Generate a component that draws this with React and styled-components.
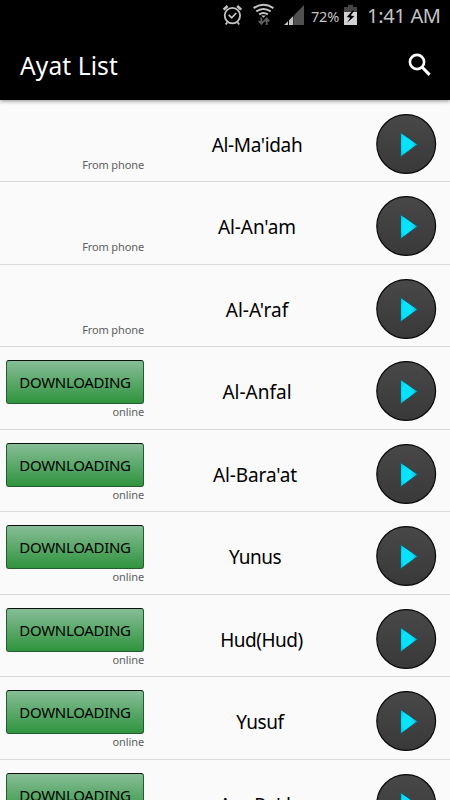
import React from "react";
import styled, { createGlobalStyle } from "styled-components";

const GlobalStyle = createGlobalStyle`
  * { box-sizing: border-box; }
  html, body { margin: 0; height: 100%; overflow: hidden; }
  body { background: #fafafa; font-family: "Noto Sans", "Open Sans", sans-serif; }
`;

const Screen = styled.div`
  width: 450px;
  height: 800px;
  overflow: hidden;
  background: #fafafa;
  display: flex;
  flex-direction: column;
`;

const Header = styled.header`
  flex: none;
  height: 100px;
  background: #000;
  box-shadow: 0 1px 4px rgba(0, 0, 0, 0.45);
  position: relative;
`;

const StatusBar = styled.div`
  height: 32px;
  display: flex;
  align-items: center;
  justify-content: flex-end;
  padding-right: 10px;
  color: #c4c4c4;
`;

const StatusIcons = styled.svg`
  width: 86px;
  height: 32px;
`;

const Percent = styled.span`
  width: 34px;
  margin-left: 6px;
  font-size: 14.5px;
  letter-spacing: -0.2px;
  line-height: 31px;
  white-space: nowrap;
`;

const Battery = styled.svg`
  width: 14px;
  height: 32px;
  margin-left: -1px;
`;

const Clock = styled.span`
  width: 73px;
  margin-left: 9px;
  font-size: 20px;
  line-height: 32px;
  letter-spacing: -0.3px;
  white-space: nowrap;
`;

const TitleBar = styled.div`
  height: 68px;
  display: flex;
  align-items: center;
  justify-content: space-between;
  padding: 0 18px 0 20px;
`;

const Title = styled.h1`
  margin: 0;
  color: #fff;
  font-size: 24.5px;
  font-weight: 400;
  line-height: 32px;
  letter-spacing: 0.12px;
`;

const SearchIcon = styled.svg`
  width: 24px;
  height: 24px;
  margin-top: -3px;
`;

const List = styled.main`
  margin-top: -0.5px;
`;

const Row = styled.div`
  height: 82.5px;
  display: grid;
  grid-template-columns: 144px 226px 60px;
  column-gap: 3px;
  border-bottom: 1.5px solid #d9d9d9;
`;

const Source = styled.div`
  padding: 13px 0 0 6px;
  display: flex;
  flex-direction: column;
  align-items: flex-end;
`;

const ButtonSlot = styled.div`
  width: 138px;
  height: 44px;
`;

const DownloadButton = styled.button`
  width: 138px;
  height: 44px;
  padding: 0;
  border: 1px solid #245b30;
  border-top-color: #0b120c;
  border-radius: 3px;
  background: linear-gradient(#87bd97, #2f943e);
  color: #000;
  font: 400 15px/42px "Noto Sans", sans-serif;
  letter-spacing: -0.3px;
  white-space: nowrap;
`;

const SourceLabel = styled.span`
  font-size: 11px;
  line-height: 15px;
  color: #606060;
  letter-spacing: -0.12px;
`;

const Name = styled.span`
  justify-self: center;
  padding-top: 30px;
  margin-right: ${(p) => 6 - 2 * p.$shift}px;
  font-size: 19px;
  line-height: 30px;
  color: #000;
  white-space: nowrap;
  letter-spacing: ${(p) => p.$tracking}px;
`;

const PlayButton = styled.svg`
  width: 62px;
  height: 62px;
  margin: 13px 0 0 -1px;
`;

const surahs = [
  { name: "Al-Ma'idah", local: true, tracking: -0.35 },
  { name: "Al-An'am", local: true, tracking: -0.1 },
  { name: "Al-A'raf", local: true },
  { name: "Al-Anfal" },
  { name: "Al-Bara'at", shift: -2, tracking: -0.1 },
  { name: "Yunus", shift: -2, tracking: -0.5 },
  { name: "Hud(Hud)", shift: 4.5, tracking: -0.5 },
  { name: "Yusuf", shift: 3, tracking: -0.4 },
  { name: "Ar - Ra'd", shift: -2, tracking: -0.2 },
];

function Play() {
  return (
    <PlayButton viewBox="0 0 62 62">
      <defs>
        <linearGradient id="disc" x2="0" y2="1">
          <stop stopColor="#484848" />
          <stop offset="1" stopColor="#393939" />
        </linearGradient>
        <radialGradient id="arrow" cx="0.35" cy="0.5" r="0.65">
          <stop offset="0.45" stopColor="#08e2ff" />
          <stop offset="1" stopColor="#10b5d0" />
        </radialGradient>
      </defs>
      <circle cx="31.2" cy="31" r="29.4" fill="url(#disc)" stroke="#080808" strokeWidth="1.2" />
      <path d="M25.6 19.4 42.6 31.4 25.6 44Z" fill="url(#arrow)" stroke="#17545f" />
    </PlayButton>
  );
}

function StatusGlyphs() {
  return (
    <StatusIcons viewBox="219 0 86 32" fill="none" stroke="#c4c4c4">
      <circle cx="232.4" cy="15.6" r="7.7" strokeWidth="1.8" />
      <path d="m228.7 14.8 3 3 4.6-4.8" strokeWidth="1.8" />
      <path d="m223.6 9.6 4-3.6M241.2 9.6l-4-3.6" strokeWidth="2.6" />
      <path d="m227.3 22.3-1.6 2.3M237.5 22.3l1.6 2.3" strokeWidth="1.8" />
      <path d="M253.6 8.1Q263.5 1.6 273.4 8.1M256.3 11.4Q263.5 6.6 270.7 11.4M259.2 14.4Q263.5 11.6 267.8 14.4" strokeWidth="2" />
      <path d="M261.3 15.5h4.4l-2.2 2.2z" fill="#c4c4c4" stroke="none" />
      <path d="M261.3 17.5v6M258.8 21l2.5 2.9 2.5-2.9M266.7 25v-6M264.2 21.3l2.5-2.9 2.5 2.9" stroke="#606060" strokeWidth="1.8" />
      <path d="M284 25 288 21.3V25ZM289 20.3 293.3 16V25H289Z" fill="#c4c4c4" stroke="none" />
      <path d="M294 15.3 304 5V25H294Z" fill="#505050" stroke="none" />
    </StatusIcons>
  );
}

export default function App() {
  return (
    <>
      <GlobalStyle />
      <Screen>
        <Header>
          <StatusBar>
            <StatusGlyphs />
            <Percent>72%</Percent>
            <Battery viewBox="345 0 14 32">
              <path d="M349 4.7h5V7h4v5h-13V7h4z" fill="#444" />
              <path d="M345 12h13v13h-13z" fill="#d2d2d2" />
              <path d="m353.6 10.5-5.8 6.4 3.4.8-3.2 5.1 7.4-6.5-3.7-.8 3.6-5z" fill="#000" />
            </Battery>
            <Clock>1:41 AM</Clock>
          </StatusBar>
          <TitleBar>
            <Title>Ayat List</Title>
            <SearchIcon viewBox="0 0 24 24" fill="none" stroke="#fff">
              <circle cx="9" cy="9" r="7.1" strokeWidth="2.6" />
              <path d="m14 14 7.6 7.8" strokeWidth="3.1" />
            </SearchIcon>
          </TitleBar>
        </Header>
        <List>
          {surahs.map((s) => (
            <Row key={s.name}>
              <Source>
                <ButtonSlot>{!s.local && <DownloadButton>DOWNLOADING</DownloadButton>}</ButtonSlot>
                <SourceLabel>{s.local ? "From phone" : "online"}</SourceLabel>
              </Source>
              <Name $shift={s.shift || 0} $tracking={s.tracking || 0}>{s.name}</Name>
              <Play />
            </Row>
          ))}
        </List>
      </Screen>
    </>
  );
}
